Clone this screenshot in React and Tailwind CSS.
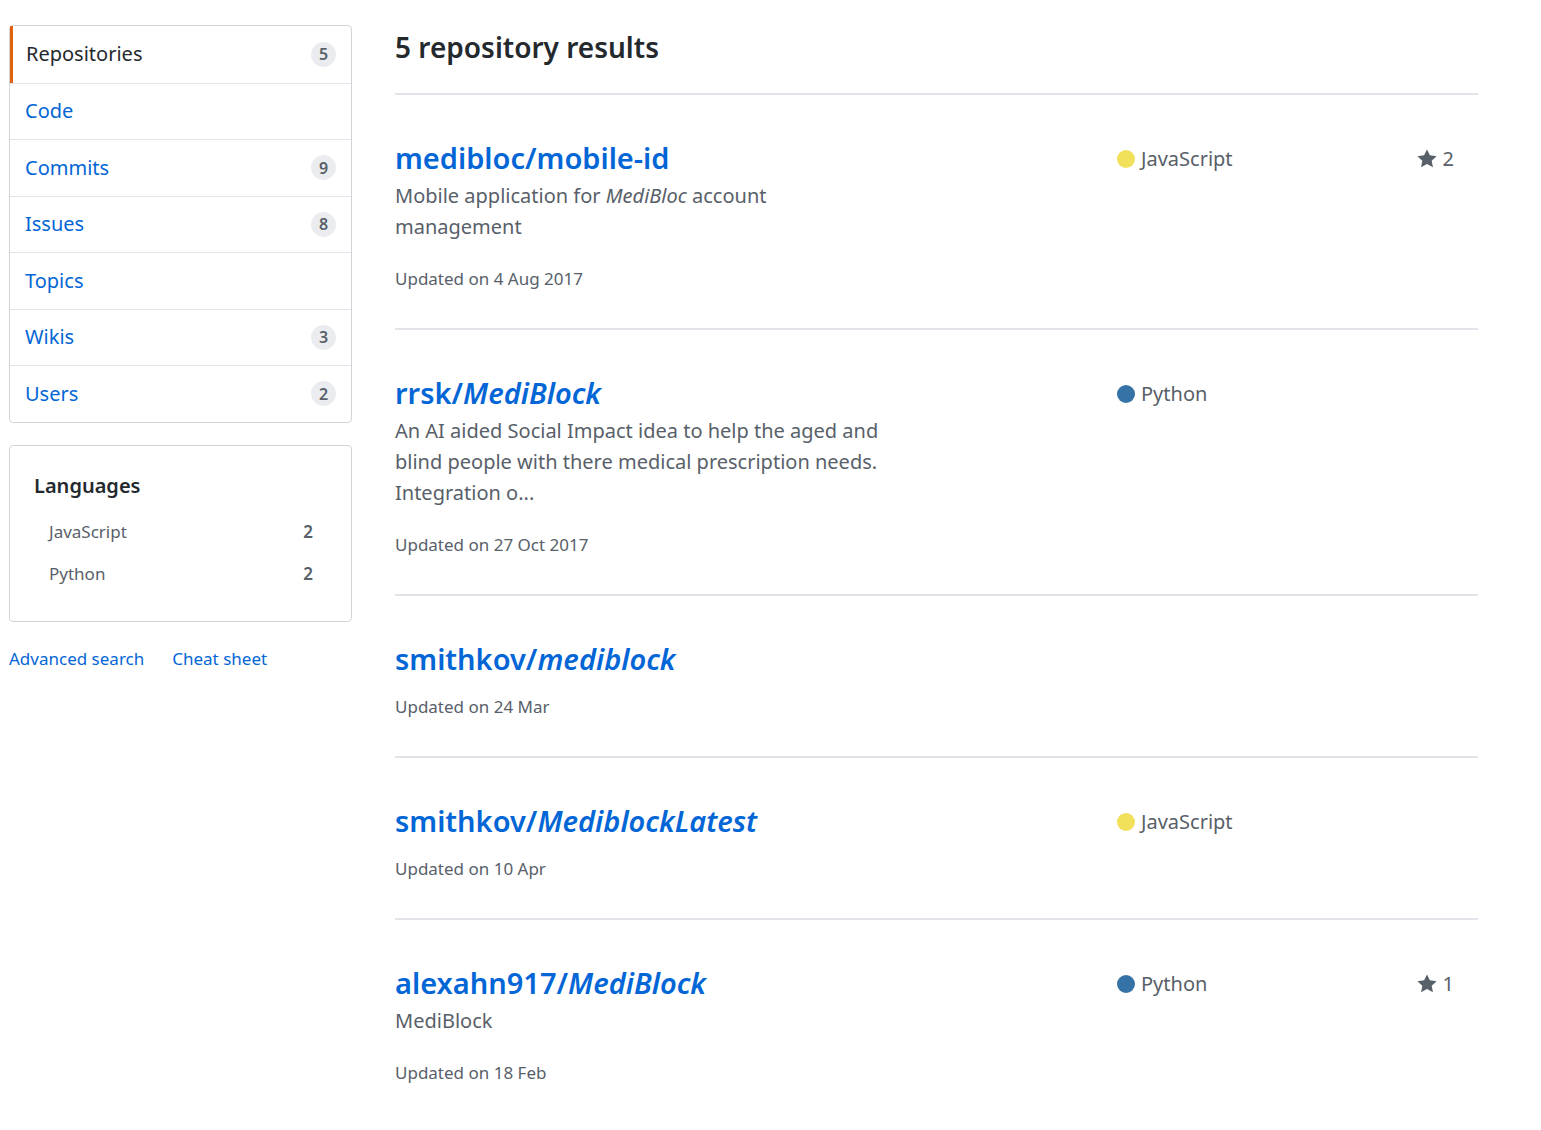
const menu = [
  { label: "Repositories", count: 5, selected: true },
  { label: "Code" },
  { label: "Commits", count: 9 },
  { label: "Issues", count: 8 },
  { label: "Topics" },
  { label: "Wikis", count: 3 },
  { label: "Users", count: 2 },
];

const repos = [
  {
    owner: "medibloc",
    name: "mobile-id",
    italic: false,
    desc: (
      <>
        Mobile application for <em>MediBloc</em> account management
      </>
    ),
    updated: "4 Aug 2017",
    lang: "JavaScript",
    color: "bg-[#f1e05a]",
    stars: 2,
  },
  {
    owner: "rrsk",
    name: "MediBlock",
    italic: true,
    desc: "An AI aided Social Impact idea to help the aged and blind people with there medical prescription needs. Integration o...",
    updated: "27 Oct 2017",
    lang: "Python",
    color: "bg-[#3572a5]",
  },
  { owner: "smithkov", name: "mediblock", italic: true, updated: "24 Mar" },
  {
    owner: "smithkov",
    name: "MediblockLatest",
    italic: true,
    updated: "10 Apr",
    lang: "JavaScript",
    color: "bg-[#f1e05a]",
  },
  {
    owner: "alexahn917",
    name: "MediBlock",
    italic: true,
    desc: "MediBlock",
    updated: "18 Feb",
    lang: "Python",
    color: "bg-[#3572a5]",
    stars: 1,
  },
];

function Star() {
  return (
    <svg viewBox="0 0 14 16" className="h-[22px] w-[20px] fill-[#586069]">
      <path d="M14 6l-4.9-.64L7 1 4.9 5.36 0 6l3.6 3.26L2.67 14 7 11.67 11.33 14l-.93-4.74L14 6z" />
    </svg>
  );
}

export default function App() {
  return (
    <div className="flex min-h-[1130px] bg-white font-['Noto_Sans',sans-serif] text-[#24292e]">
      <aside className="ml-[9px] mt-[25px] w-[343px] shrink-0">
        <nav className="rounded border border-[#d1d5da]">
          {menu.map((m, i) => (
            <div
              key={m.label}
              className={`flex h-[56.5px] items-center justify-between pr-[15px] ${
                i > 0 ? "border-t border-[#e1e4e8]" : ""
              } ${m.selected ? "border-l-[3px] border-l-[#e36209] pl-[13px] text-[#24292e]" : "pl-[15px] text-[#0366d6]"}`}
            >
              <span className="text-[20px]">{m.label}</span>
              {m.count && (
                <span className="flex h-[25px] min-w-[25px] items-center justify-center rounded-full bg-[#eaecef] px-[6px] text-[16px] font-semibold text-[#586069]">
                  {m.count}
                </span>
              )}
            </div>
          ))}
        </nav>

        <div className="mt-[22px] rounded border border-[#d1d5da] pb-[26px] pl-[24px] pr-[38px] pt-[25px]">
          <h2 className="text-[20px] font-semibold text-[#24292e]">Languages</h2>
          <ul className="mt-[10px] pl-[15px] text-[17px] text-[#586069]">
            <li className="flex h-[42px] items-center justify-between">
              <span>JavaScript</span>
              <span className="font-semibold">2</span>
            </li>
            <li className="flex h-[42px] items-center justify-between">
              <span>Python</span>
              <span className="font-semibold">2</span>
            </li>
          </ul>
        </div>

        <div className="mt-[24px] flex gap-[28px] text-[17px] text-[#0366d6]">
          <span>Advanced search</span>
          <span>Cheat sheet</span>
        </div>
      </aside>

      <main className="ml-[43px] mt-[27px] w-[1083px]">
        <h1 className="border-b-2 border-[#e1e4e8] pb-[26px] text-[28px] font-semibold leading-[40px]">
          5 repository results
        </h1>
        {repos.map((r, i) => (
          <div
            key={i}
            className={`flex pb-[36px] pt-[41px] ${i < repos.length - 1 ? "border-b-2 border-[#e1e4e8]" : ""}`}
          >
            <div className="w-2/3">
              <h3 className="text-[29px] font-semibold leading-[44px] text-[#0366d6]">
                {r.owner}/{r.italic ? <em>{r.name}</em> : r.name}
              </h3>
              {r.desc && (
                <p className="w-[495px] text-[20px] leading-[31px] text-[#586069]">{r.desc}</p>
              )}
              <p className={`${r.desc ? "mt-[24px]" : "mt-[13px]"} text-[17px] leading-[26px] text-[#586069]`}>
                Updated on {r.updated}
              </p>
            </div>
            <div className="flex w-1/6 items-start pt-[8px]">
              {r.lang && (
                <span className="flex items-center gap-[6px] text-[20px] text-[#586069]">
                  <span className={`h-[18px] w-[18px] rounded-full ${r.color}`} />
                  {r.lang}
                </span>
              )}
            </div>
            <div className="flex w-1/6 items-start justify-end pr-[24px] pt-[8px]">
              {r.stars && (
                <span className="flex items-center gap-[6px] text-[20px] text-[#586069]">
                  <Star />
                  {r.stars}
                </span>
              )}
            </div>
          </div>
        ))}
      </main>
    </div>
  );
}
